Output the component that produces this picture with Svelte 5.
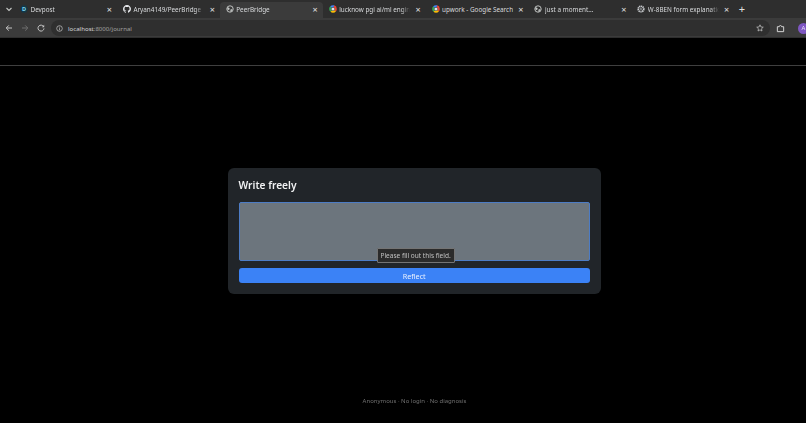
<script>
  const tabs = [
    { title: 'Devpost', icon: 'devpost' },
    { title: 'Aryan4149/PeerBridge', icon: 'github' },
    { title: 'PeerBridge', icon: 'globe', active: true },
    { title: 'lucknow pgi ai/ml engineer', icon: 'google' },
    { title: 'upwork - Google Search', icon: 'google' },
    { title: 'just a moment...', icon: 'globe' },
    { title: 'W-8BEN form explanation', icon: 'openai' }
  ]
</script>

<div class="page">
  <div class="chrome">
    <div class="tabstrip">
      <svg class="tab-menu" viewBox="0 0 8 8" width="8" height="8">
        <path d="M1.5 3 L4 5.5 L6.5 3" fill="none" stroke="#c4c7c5" stroke-width="1.1" />
      </svg>
      {#each tabs as tab}
        <div class="tab" class:active={tab.active}>
          <span class="favicon">
            {#if tab.icon === 'devpost'}
              <svg viewBox="0 0 10 10" width="8" height="8">
                <path d="M2.5 0.5 H7.5 L10 5 L7.5 9.5 H2.5 L0 5 Z" fill="#11384a" />
                <text x="5" y="7.4" text-anchor="middle" class="dp">D</text>
              </svg>
            {:else if tab.icon === 'github'}
              <svg viewBox="0 0 16 16" width="8" height="8">
                <path fill="#e8eaed" d="M8 0C3.58 0 0 3.58 0 8c0 3.54 2.29 6.53 5.47 7.59.4.07.55-.17.55-.38v-1.34c-2.23.48-2.69-1.07-2.69-1.07-.36-.92-.89-1.17-.89-1.17-.73-.5.05-.49.05-.49.8.06 1.23.82 1.23.82.71 1.22 1.87.87 2.33.66.07-.52.28-.87.5-1.07-1.78-.2-3.64-.89-3.64-3.95 0-.87.31-1.59.82-2.15-.08-.2-.36-1.02.08-2.12 0 0 .67-.21 2.2.82a7.6 7.6 0 0 1 4 0c1.53-1.04 2.2-.82 2.2-.82.44 1.1.16 1.92.08 2.12.51.56.82 1.27.82 2.15 0 3.07-1.87 3.75-3.65 3.95.29.25.54.73.54 1.48v2.2c0 .21.15.46.55.38A8 8 0 0 0 16 8c0-4.42-3.58-8-8-8z" />
              </svg>
            {:else if tab.icon === 'google'}
              <svg viewBox="0 0 10 10" width="8" height="8">
                <circle cx="5" cy="5" r="3.6" fill="none" stroke="#ea4335" stroke-width="2.4" stroke-dasharray="7.5 15.2" stroke-dashoffset="5" />
                <circle cx="5" cy="5" r="3.6" fill="none" stroke="#fbbc05" stroke-width="2.4" stroke-dasharray="5.6 17.1" stroke-dashoffset="-2.5" />
                <circle cx="5" cy="5" r="3.6" fill="none" stroke="#34a853" stroke-width="2.4" stroke-dasharray="5.6 17.1" stroke-dashoffset="-8.1" />
                <circle cx="5" cy="5" r="3.6" fill="none" stroke="#4285f4" stroke-width="2.4" stroke-dasharray="4 18.7" stroke-dashoffset="-13.7" />
                <circle cx="5" cy="5" r="2" fill="#dfe3e8" />
              </svg>
            {:else if tab.icon === 'openai'}
              <svg viewBox="0 0 10 10" width="8" height="8">
                <circle cx="5" cy="5" r="3.4" fill="none" stroke="#c9cccf" stroke-width="2.2" stroke-dasharray="1.6 0.6" />
                <circle cx="5" cy="5" r="1.2" fill="#8f9295" />
              </svg>
            {:else}
              <svg viewBox="0 0 10 10" width="8" height="8">
                <circle cx="5" cy="5" r="4" fill="none" stroke="#c4c7c5" stroke-width="1.2" />
                <path d="M2 2.6 L4.6 4 L3.8 6.6 L1.6 5.4 Z M5.6 5.6 L8 5 L7 8 L5.4 8.4 Z" fill="#c4c7c5" />
              </svg>
            {/if}
          </span>
          <span class="tab-title" class:fits={tab.title.startsWith('upwork')}>{tab.title}</span>
          <span class="tab-close">×</span>
        </div>
      {/each}
      <span class="new-tab">+</span>
    </div>

    <div class="toolbar">
      <svg class="nav" viewBox="0 0 8 8" width="8" height="8">
        <path d="M7 4 H1.4 M3.8 1.4 L1.2 4 L3.8 6.6" fill="none" stroke="#c7c7c7" stroke-width="1" />
      </svg>
      <svg class="nav" viewBox="0 0 8 8" width="8" height="8">
        <path d="M1 4 H6.6 M4.2 1.4 L6.8 4 L4.2 6.6" fill="none" stroke="#6f6f6f" stroke-width="1" />
      </svg>
      <svg class="nav" viewBox="0 0 8 8" width="8" height="8">
        <path d="M6.6 2.6 A3 3 0 1 0 7 4.4" fill="none" stroke="#c7c7c7" stroke-width="1" />
        <path d="M7.2 0.8 V3.2 H4.8 Z" fill="#c7c7c7" />
      </svg>
      <div class="omnibox">
        <svg viewBox="0 0 8 8" width="7" height="7">
          <circle cx="4" cy="4" r="3.2" fill="none" stroke="#c7c7c7" stroke-width="0.8" />
          <path d="M4 3.6 V6 M4 2 V2.9" stroke="#c7c7c7" stroke-width="0.8" />
        </svg>
        <span class="url"><span class="host">localhost</span>:8000/journal</span>
        <svg class="star" viewBox="0 0 10 10" width="8" height="8">
          <path d="M5 1 L6.2 3.7 L9.1 4 L6.9 5.9 L7.5 8.8 L5 7.3 L2.5 8.8 L3.1 5.9 L0.9 4 L3.8 3.7 Z" fill="none" stroke="#c7c7c7" stroke-width="0.9" />
        </svg>
      </div>
      <svg class="ext" viewBox="0 0 10 10" width="9" height="9">
        <path d="M1.5 3 H3.6 A1.3 1.3 0 0 1 6.2 3 H8.5 V8.5 H1.5 Z" fill="none" stroke="#d5d5d5" stroke-width="1.1" />
      </svg>
      <span class="avatar">A</span>
    </div>
  </div>

  <div class="content">
    <div class="site-header"></div>

    <main>
      <section class="card">
        <h1>Write freely</h1>
        <div class="field">
          <div class="textarea"></div>
          <div class="tooltip">Please fill out this field.</div>
        </div>
        <button>Reflect</button>
      </section>
    </main>

    <footer>Anonymous · No login · No diagnosis</footer>
  </div>
</div>

<style>
  :global(body) {
    margin: 0;
    background: #000;
  }

  .page {
    width: 806px;
    height: 423px;
    display: flex;
    flex-direction: column;
    overflow: hidden;
    background: #000;
    font-family: "Noto Sans", "Open Sans", sans-serif;
  }

  .chrome {
    flex: none;
    background: #3b3b3b;
  }

  .tabstrip {
    height: 18px;
    display: flex;
    align-items: flex-end;
    background: #2e2e2e;
    transform: translateZ(0);
  }

  .tab-menu {
    margin: 0 1px 5px 5px;
    flex: none;
  }

  .tab {
    width: 102.9px;
    height: 16px;
    flex: none;
    display: flex;
    align-items: center;
    gap: 2.5px;
    padding: 0 5px 2px 6px;
    box-sizing: border-box;
    border-radius: 4px 4px 0 0;
    color: #d8dadc;
    font-size: 6.35px;
  }

  .tab.active {
    background: #3b3b3b;
  }

  .favicon {
    display: flex;
    flex: none;
  }

  .dp {
    font: bold 7px "Noto Sans", sans-serif;
    fill: #7fd3ee;
  }

  .tab-title {
    flex: 1;
    min-width: 0;
    overflow: hidden;
    white-space: nowrap;
    -webkit-mask-image: linear-gradient(to right, #000 88%, transparent);
    mask-image: linear-gradient(to right, #000 88%, transparent);
  }

  .tab-title.fits {
    -webkit-mask-image: none;
    mask-image: none;
  }

  .tab-close {
    flex: none;
    margin-left: 3px;
    font-size: 9px;
    line-height: 1;
    color: #e0e0e0;
  }

  .new-tab {
    margin: 0 0 2px 4.5px;
    color: #e0e0e0;
    font-size: 11px;
    line-height: 14px;
  }

  .toolbar {
    height: 20px;
    display: flex;
    align-items: center;
    box-shadow: inset 0 -1px 0 #2e2e2e;
    transform: translateZ(0);
  }

  .nav {
    flex: none;
    margin-left: 5px;
    margin-right: 3px;
  }

  .omnibox {
    flex: 1;
    height: 16px;
    margin-left: 3px;
    padding: 0 6px 0 5px;
    display: flex;
    align-items: center;
    gap: 5px;
    background: #2f2f2f;
    border-radius: 8px;
  }

  .url {
    flex: 1;
    font-size: 6.1px;
    color: #a0a0a0;
  }

  .host {
    color: #d8d8d8;
  }

  .ext {
    flex: none;
    margin-left: 6.5px;
  }

  .avatar {
    flex: none;
    width: 11px;
    height: 11px;
    margin: 0 -3px 0 13px;
    border-radius: 50%;
    background: #7e57c2;
    color: #e9def9;
    font-size: 6px;
    line-height: 11px;
    text-align: center;
  }

  /* the page under the browser bar is wider than the visible window */
  .content {
    flex: 1;
    width: 829px;
    display: flex;
    flex-direction: column;
    transform: translateZ(0);
  }

  .site-header {
    height: 27px;
    flex: none;
    border-bottom: 1px solid #3f3f3f;
  }

  main {
    flex: 1;
    display: flex;
    align-items: center;
    justify-content: center;
  }

  .card {
    width: 373px;
    box-sizing: border-box;
    padding: 10px 11px 10.5px 10.5px;
    background: #212529;
    border-radius: 6px;
    display: flex;
    flex-direction: column;
  }

  h1 {
    margin: 0 0 10px;
    color: #f1f2f3;
    font-size: 10.2px;
    font-weight: 600;
    line-height: 14px;
  }

  .field {
    position: relative;
    margin-bottom: 6.5px;
  }

  .textarea {
    height: 57px;
    background: #6c757d;
    border: 1px solid #4d7cc4;
    border-radius: 2px;
  }

  .tooltip {
    position: absolute;
    left: 138px;
    top: 46px;
    padding: 0 3px;
    height: 15px;
    line-height: 14px;
    white-space: nowrap;
    box-sizing: border-box;
    background: #2b2b2b;
    border: 1px solid #747474;
    border-radius: 1px;
    color: #c0c0c0;
    font-size: 6.5px;
  }

  button {
    height: 15.5px;
    padding: 0;
    border: 0;
    border-radius: 3px;
    background: #3b82f6;
    color: #e8f0fe;
    font: 7.2px "Noto Sans", "Open Sans", sans-serif;
  }

  footer {
    height: 27px;
    flex: none;
    text-align: center;
    color: #707070;
    font-size: 6px;
    line-height: 10px;
  }
</style>
